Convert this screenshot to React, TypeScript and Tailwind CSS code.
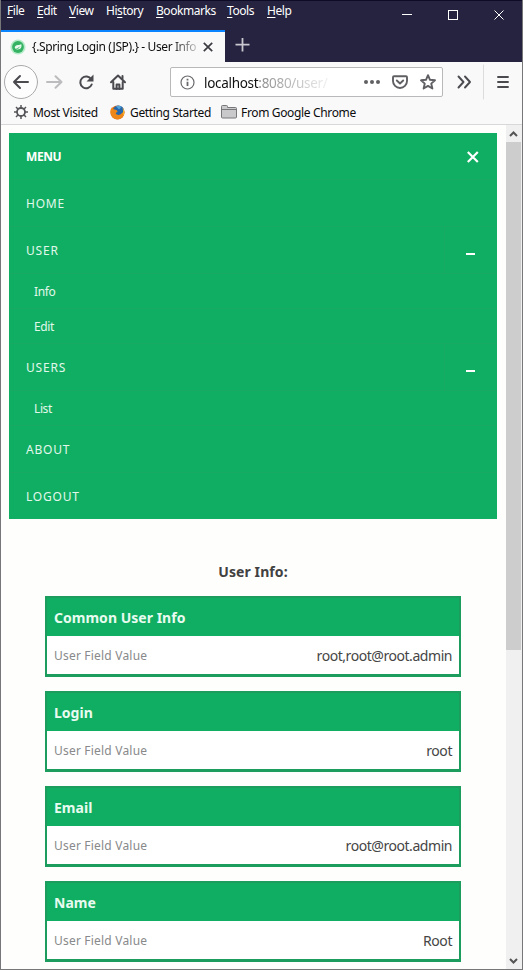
import React from "react";

const menus = [
  { pre: "", key: "F", post: "ile", w: "w-[30px]" },
  { pre: "", key: "E", post: "dit", w: "w-8" },
  { pre: "", key: "V", post: "iew", w: "w-[37px]" },
  { pre: "Hi", key: "s", post: "tory", w: "w-[50px]" },
  { pre: "", key: "B", post: "ookmarks", w: "w-[71px]" },
  { pre: "", key: "T", post: "ools", w: "w-10" },
  { pre: "", key: "H", post: "elp", w: "w-10" },
];

function TitleBar() {
  return (
    <header className="flex h-[62px] flex-col border-t border-[#0d0b25] bg-[#25233f] text-white">
      <div className="flex h-[29px] items-start pl-[6px]">
        <nav className="flex text-[12px] leading-[19px] tracking-[-0.45px]">
          {menus.map((m) => (
            <span key={m.key + m.post} className={`${m.w} shrink-0 whitespace-nowrap`}>
              {m.pre}
              <u className="underline decoration-1 underline-offset-2">{m.key}</u>
              {m.post}
            </span>
          ))}
        </nav>
        <svg className="ml-auto mr-[15px] mt-[7px] shrink-0" width="106" height="14" fill="none" stroke="#fff" strokeWidth="1" shapeRendering="crispEdges">
          <path d="M1 6.5h10M47.5 2.5h9v9h-9z" />
          <path d="M93.5 2.5l9 9M102.5 2.5l-9 9" shapeRendering="auto" />
        </svg>
      </div>
      <div className="flex h-8">
        <div className="flex h-full w-[224px] items-center border-t-2 border-[#0a84ff] bg-[#f9f9fa] pl-[9px] text-[#0c0c0d]">
          <svg width="16" height="16" viewBox="0 0 16 16" className="shrink-0">
            <circle cx="8" cy="8" r="7.6" fill="#b6ebc9" />
            <circle cx="8" cy="8" r="5.9" fill="#35b263" />
            <path d="M11.200 5c-.7.900-2 .9-3.100 1.100C5.700 6.400 4.600 7.300 4.800 8.800c.3 1.900 3.200 2.100 4.900 1.300 1.700-.8 2.200-3 1.500-5.100z" fill="#e9f9ee" />
            <path d="M5.300 10.200c2-.3 3.500-1.100 4.600-2.500" stroke="#35b263" fill="none" strokeWidth=".8" />
          </svg>
          <span className="ml-[6px] w-[168px] shrink-0 whitespace-nowrap bg-linear-to-r from-[#0c0c0d] from-83% to-[#0c0c0d]/10 bg-clip-text text-[12px] tracking-[-0.4px] text-transparent">
            {"{.Spring Login (JSP).} - User Info"}
          </span>
          <svg width="10" height="10" className="ml-[3px] shrink-0" stroke="#3b3b40" strokeWidth="1.7">
            <path d="M.8.8l8.400 8.400M9.200.8L.8 9.200" />
          </svg>
        </div>
        <svg width="15" height="15" className="ml-[10px] mt-[7px]" stroke="#c9c8d0" strokeWidth="1.800">
          <path d="M7.500 1v13.500M.5 7.700h14" />
        </svg>
      </div>
    </header>
  );
}

function Toolbar() {
  return (
    <div className="flex h-[40px] items-center bg-[#f9f9fa]">
      <svg width="169" height="40" className="shrink-0" fill="none" stroke="#4a4a4f" strokeWidth="2" strokeLinecap="round" strokeLinejoin="round">
        <circle cx="20" cy="20" r="16.500" fill="#fdfdfe" stroke="#aaaaac" strokeWidth="1" />
        <path d="M27 20H13M19 14l-6 6 6 6" />
        <path d="M46 20h14M54.500 14.200l6 5.800-6 5.800" stroke="#bcbcbe" />
        <path d="M90.200 17.200a5.900 5.900 0 1 0 .5 5.300" />
        <path d="M92.500 12.500v7h-7z" fill="#4a4a4f" stroke="none" />
        <path d="M110 20.300l7-6.800 7 6.800M112.300 20v6.800h9.400V20" />
        <path d="M115.600 27v-4.500h2.800V27M121.500 14v2.500" />
      </svg>
      <div className="flex h-[30px] w-[273px] shrink-0 items-center rounded-[2px] border border-[#b9b9bb] bg-white pl-[9px]">
        <svg width="15" height="15" fill="none" stroke="#6a6a6e" className="shrink-0">
          <circle cx="7.500" cy="7.500" r="6.500" strokeWidth="1.200" />
          <path d="M7.500 6.700v4.300M7.500 3.800v1.600" strokeWidth="1.800" />
        </svg>
        <span className="ml-[9px] mt-[2px] w-[126px] shrink-0 whitespace-nowrap bg-linear-to-r from-[#111] from-44% via-[#88888a] via-44% to-[#88888a]/10 bg-clip-text text-[13.5px] leading-5 tracking-[-0.3px] text-transparent">
          localhost:8080/user/
        </span>
        <svg width="76" height="20" viewBox="0 0 76 20" className="ml-[33px] shrink-0" fill="none" stroke="#606064" strokeWidth="1.900" strokeLinejoin="round" strokeLinecap="round">
          <g fill="#606064" stroke="none">
            <circle cx="3" cy="10" r="2" />
            <circle cx="9" cy="10" r="2" />
            <circle cx="15" cy="10" r="2" />
          </g>
          <path d="M31 4.200h12c.7 0 1 .3 1 1V9a7 7 0 0 1-14 0V5.200c0-.7.300-1 1-1z" />
          <path d="M33.800 8.500L37 11.500l3.200-3" />
          <path d="M65 3.200l2 4.600 5 .5-3.800 3.300 1.200 4.900-4.400-2.600-4.400 2.600 1.200-4.900L58 8.300l5-.5z" />
        </svg>
      </div>
      <svg width="79" height="40" className="shrink-0" fill="none" stroke="#4a4a4f" strokeWidth="1.900" strokeLinecap="round" strokeLinejoin="round">
        <path d="M15.500 14.500l5 5.500-5 5.500M22 14.500l5 5.500-5 5.500" />
        <path d="M40.500 3v34" stroke="#dcdcde" strokeWidth="1" />
        <path d="M55 15h10M55 20h10M55 25h10" />
      </svg>
    </div>
  );
}

function Bookmarks() {
  return (
    <div className="flex h-[23px] items-center border-b border-[#d8d8da] bg-[#f9f9fa] pl-[13px] text-[12px] tracking-[-0.35px] text-[#0c0c0d]">
      <svg width="14" height="14" viewBox="0 0 14 14" fill="none" stroke="#56565a" className="mb-[2px] shrink-0">
        <circle cx="7" cy="7" r="4" strokeWidth="1.800" />
        <path d="M7 0v3M7 11v3M0 7h3M11 7h3M2 2l2.200 2.200M9.800 9.800L12 12M12 2L9.800 4.200M4.200 9.800L2 12" strokeWidth="1.500" />
      </svg>
      <span className="ml-[5px] w-[77px] shrink-0 whitespace-nowrap">Most Visited</span>
      <svg width="15" height="15" viewBox="0 0 15 15" className="mb-[2px] shrink-0">
        <circle cx="7.500" cy="7.500" r="7" fill="#e66a12" />
        <circle cx="8.500" cy="6" r="5.500" fill="#2467ad" />
        <path d="M6 1.300c2-.8 4-.5 5.500.8L9 4.500z" fill="#54a5db" />
        <path d="M.7 4.500L2 2.300l1.500 2L6.500 5l1.200 1.700-2 1.300c.8 2.700 4.500 2.500 6 .3L14.300 6c.8 6-4 8.800-7.800 8.300C1.500 13.500-.3 9 .7 4.500z" fill="#ee8618" />
        <path d="M12.500 2.500c2 2.400 2.300 6 .4 8.400.4-2.500.4-5.400-.4-8.400z" fill="#f9bc2d" />
      </svg>
      <span className="ml-[5px] w-[91px] shrink-0 whitespace-nowrap">Getting Started</span>
      <svg width="16" height="14" fill="#c9c9cb" stroke="#77777a" className="mb-[2px] shrink-0">
        <path d="M.5 12v-10.500q0-1 1-1h4q1 0 1 1v1h8q1 0 1 1v8.500q0 1-1 1h-13q-1 0-1-1zM.5 4.500h15" />
      </svg>
      <span className="ml-1 whitespace-nowrap">From Google Chrome</span>
    </div>
  );
}

type Item = { label: string; sub?: boolean; toggle?: boolean; head?: boolean };
const items: Item[] = [
  { label: "MENU", head: true },
  { label: "HOME" },
  { label: "USER", toggle: true },
  { label: "Info", sub: true },
  { label: "Edit", sub: true },
  { label: "USERS", toggle: true },
  { label: "List", sub: true },
  { label: "ABOUT" },
  { label: "LOGOUT" },
];

function SiteMenu() {
  return (
    <nav className="ml-2 h-[386px] w-[488px] overflow-hidden bg-[#10ae62] text-[12px] text-[#e3f8ec]">
      {items.map((it) => (
        <div
          key={it.label}
          className={`flex items-center border-b border-[#18a962] ${it.sub ? "h-[35px] pl-[25px] tracking-[-0.4px]" : "h-[47px] pl-[17px]"} ${it.head ? "font-bold tracking-[-0.4px] text-white" : it.sub ? "" : "tracking-[0.8px]"}`}
        >
          <span className="pt-[2px]">{it.label}</span>
          {it.head && (
            <svg width="12" height="12" className="ml-auto mr-[18px] mt-[2px]" stroke="#fff" strokeWidth="2.200">
              <path d="M.8 1l10 10M10.800 1l-10 10" />
            </svg>
          )}
          {it.toggle && (
            <span className="ml-auto flex h-full w-[53px] items-center border-l border-[#18a962] pl-[21px] pt-[7px]">
              <span className="h-[2px] w-[9px] bg-white" />
            </span>
          )}
        </div>
      ))}
    </nav>
  );
}

const fields = [
  ["Common User Info", "root,root@root.admin"],
  ["Login", "root"],
  ["Email", "root@root.admin"],
  ["Name", "Root"],
];

function UserInfo() {
  return (
    <main className="ml-[44px] mt-[42px] w-[416px]">
      <h1 className="mb-[13px] text-center text-[14px] leading-[22px] font-bold tracking-[0.1px] text-[#414141]">User Info:</h1>
      <div className="flex flex-col gap-[14px]">
        {fields.map(([name, value]) => (
          <section key={name} className="h-[81px] border-2 border-b-[3px] border-[#1c9c5d] bg-white">
            <h2 className="flex h-[38px] items-center bg-[#10ae62] pl-[7px] text-[14px] font-bold tracking-[0.02px] text-[#e8fbf0]">{name}</h2>
            <div className="flex h-[38px] items-center justify-between pl-[7px] pr-[7px]">
              <span className="pt-[2px] text-[12px] tracking-[0.2px] text-[#88898a]">User Field Value</span>
              <span className="text-[14px] tracking-[-0.45px] text-[#454545]">{value}</span>
            </div>
          </section>
        ))}
      </div>
    </main>
  );
}

function Scrollbar() {
  return (
    <aside className="flex w-4 shrink-0 flex-col bg-[#f0f0f0]">
      <svg width="16" height="17" fill="none" stroke="#555" strokeWidth="2">
        <path d="M4 11l3.500-3.500L11 11" />
      </svg>
      <div className="h-[508px] w-[15px] bg-[#cdcdcd]" />
      <svg width="16" height="17" className="mt-auto" fill="none" stroke="#555" strokeWidth="2">
        <path d="M4 7l3.500 3.500L11 7" />
      </svg>
    </aside>
  );
}

export default function App() {
  return (
    <div className="flex h-[970px] w-[523px] flex-col overflow-hidden border-x border-b border-[#77777a] bg-[#fefefd] font-['Noto_Sans',sans-serif]">
      <TitleBar />
      <Toolbar />
      <Bookmarks />
      <div className="flex min-h-0 flex-1">
        <div className="min-w-0 flex-1 pt-2">
          <SiteMenu />
          <UserInfo />
        </div>
        <Scrollbar />
      </div>
    </div>
  );
}
